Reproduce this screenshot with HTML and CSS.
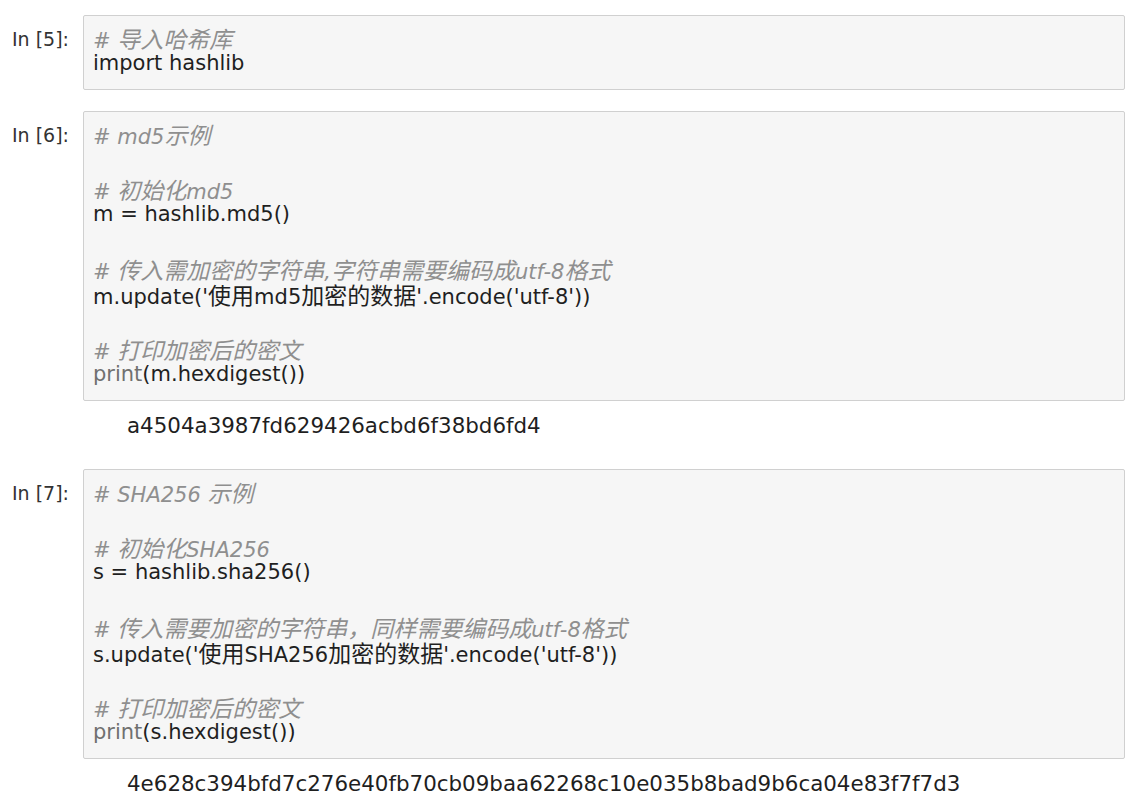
FILE: index.html
```html
<!DOCTYPE html>
<html lang="zh-CN">
<head>
<meta charset="utf-8">
<title>hashlib notebook</title>
<link rel="stylesheet" href="styles.css">
</head>
<body>
<div class="notebook">
  <div class="cell first">
    <div class="prompt">In [5]:</div>
    <div class="input-area">
      <div class="line"><span class="cm"># <span class="zh">导入哈希库</span></span></div>
      <div class="line"><span class="kw">import</span> hashlib</div>
    </div>
  </div>

  <div class="cell">
    <div class="prompt">In [6]:</div>
    <div class="input-area">
      <div class="line"><span class="cm"># md5<span class="zh">示例</span></span></div>
      <div class="blank"></div>
      <div class="line"><span class="cm"># <span class="zh">初始化</span>md5</span></div>
      <div class="line">m = hashlib.md5()</div>
      <div class="blank"></div>
      <div class="line"><span class="cm"># <span class="zh">传入需加密的字符串</span>,<span class="zh">字符串需要编码成</span>utf-8<span class="zh">格式</span></span></div>
      <div class="line">m.update('<span class="zh">使用</span>md5<span class="zh">加密的数据</span>'.encode('utf-8'))</div>
      <div class="blank"></div>
      <div class="line"><span class="cm"># <span class="zh">打印加密后的密文</span></span></div>
      <div class="line"><span class="bi">print</span>(m.hexdigest())</div>
    </div>
  </div>
  <div class="output">a4504a3987fd629426acbd6f38bd6fd4</div>

  <div class="cell after-output">
    <div class="prompt">In [7]:</div>
    <div class="input-area">
      <div class="line"><span class="cm"># SHA256 <span class="zh">示例</span></span></div>
      <div class="blank"></div>
      <div class="line"><span class="cm"># <span class="zh">初始化</span>SHA256</span></div>
      <div class="line">s = hashlib.sha256()</div>
      <div class="blank"></div>
      <div class="line"><span class="cm"># <span class="zh">传入需要加密的字符串，同样需要编码成</span>utf-8<span class="zh">格式</span></span></div>
      <div class="line">s.update('<span class="zh">使用</span>SHA256<span class="zh">加密的数据</span>'.encode('utf-8'))</div>
      <div class="blank"></div>
      <div class="line"><span class="cm"># <span class="zh">打印加密后的密文</span></span></div>
      <div class="line"><span class="bi">print</span>(s.hexdigest())</div>
    </div>
  </div>
  <div class="output">4e628c394bfd7c276e40fb70cb09baa62268c10e035b8bad9b6ca04e83f7f7d3</div>
</div>
</body>
</html>
```

FILE: styles.css
```css
html, body {
  margin: 0;
  padding: 0;
  background: #ffffff;
}

body {
  font-family: "DejaVu Sans", "Noto Sans CJK SC", sans-serif;
  color: #1f1f1f;
  width: 1136px;
  height: 808px;
  overflow: hidden;
}

.notebook {
  padding-top: 15px;
}

.cell {
  display: flex;
  align-items: flex-start;
  margin-top: 21px;
}

.cell.first {
  margin-top: 0;
}

.cell.after-output {
  margin-top: 31px;
}

.prompt {
  width: 83px;
  flex: none;
  box-sizing: border-box;
  padding-right: 14px;
  padding-top: 12px;
  text-align: right;
  font-size: 19px;
  line-height: 25px;
  color: #333333;
  white-space: nowrap;
}

.input-area {
  flex: 1;
  margin-right: 11px;
  background: #f6f6f6;
  border: 1px solid #d0d0d0;
  border-radius: 2px;
  padding: 10px 9px 13px;
  font-size: 21px;
  line-height: 25px;
}

.line {
  height: 25px;
  white-space: pre;
}

.blank {
  height: 30px;
}

.zh {
  display: inline-block;
  font-family: "Noto Sans CJK SC", sans-serif;
  font-size: 23px;
  line-height: 25px;
  height: 25px;
}

.cm {
  color: #8f8f8f;
  font-style: italic;
}

.kw {
  color: #1f1f1f;
}

.bi {
  color: #707070;
}

.output {
  padding-left: 127px;
  margin-top: 12px;
  font-size: 21.4px;
  line-height: 25px;
  color: #1f1f1f;
}
```
